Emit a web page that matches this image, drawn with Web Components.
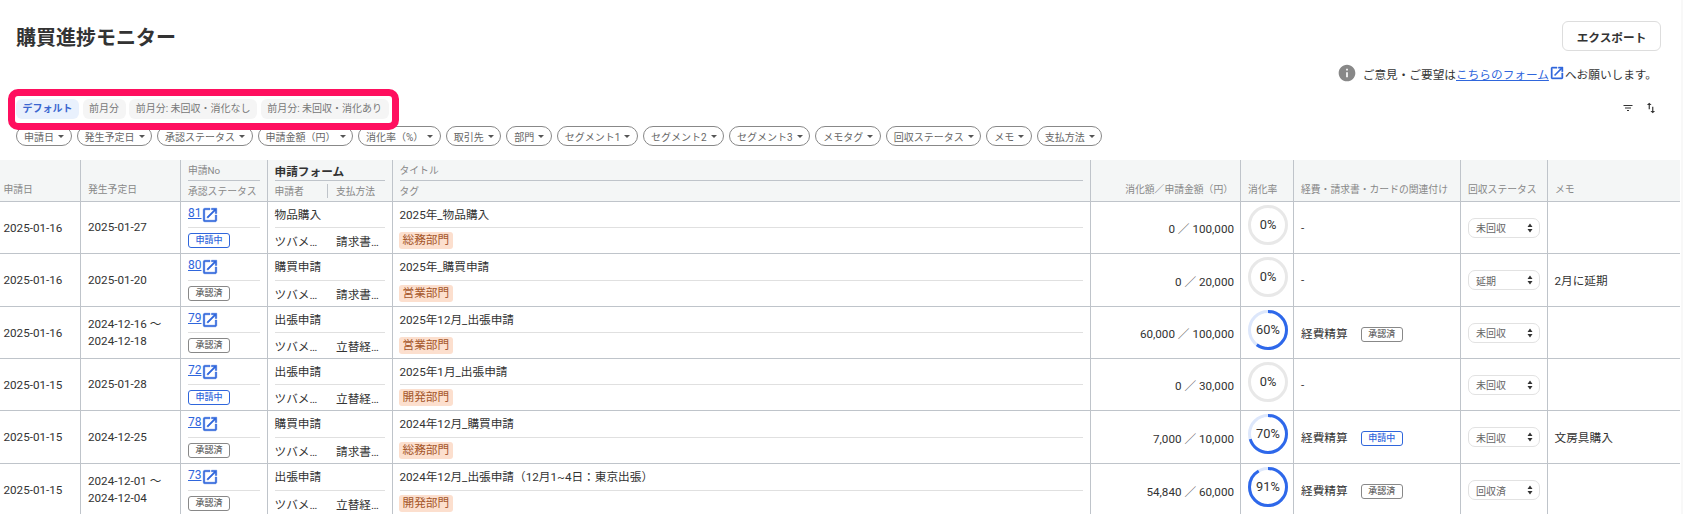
<!DOCTYPE html>
<html lang="ja">
<head>
<meta charset="utf-8">
<title>購買進捗モニター</title>
<style>
html, body { margin: 0; height: 514px; overflow: hidden; }
html { background: #fff; }
body { background: linear-gradient(to right, #fff 1681px, #f8f8f8 1681px); font-family: Roboto, "Noto Sans CJK JP", sans-serif; color: #333; font-size: 11.67px; }
</style>
</head>
<body>
<pm-toolbar heading="購買進捗モニター" action="エクスポート"></pm-toolbar>
<pm-notice></pm-notice>
<pm-tabs highlight>
  <pm-tab active>デフォルト</pm-tab>
  <pm-tab>前月分</pm-tab>
  <pm-tab>前月分: 未回収・消化なし</pm-tab>
  <pm-tab>前月分: 未回収・消化あり</pm-tab>
</pm-tabs>
<pm-filters>
  <pm-chip>申請日</pm-chip>
  <pm-chip>発生予定日</pm-chip>
  <pm-chip>承認ステータス</pm-chip>
  <pm-chip>申請金額（円）</pm-chip>
  <pm-chip>消化率（%）</pm-chip>
  <pm-chip>取引先</pm-chip>
  <pm-chip>部門</pm-chip>
  <pm-chip>セグメント1</pm-chip>
  <pm-chip>セグメント2</pm-chip>
  <pm-chip>セグメント3</pm-chip>
  <pm-chip>メモタグ</pm-chip>
  <pm-chip>回収ステータス</pm-chip>
  <pm-chip>メモ</pm-chip>
  <pm-chip>支払方法</pm-chip>
</pm-filters>
<pm-table-head></pm-table-head>
<pm-row h="52" date="2025-01-16" due="2025-01-27" no="81" status="申請中" form="物品購入" person="ツバメ…" pay="請求書…" name="2025年_物品購入" tag="総務部門" amount="0 ／ 100,000" pct="0" recovery="未回収"></pm-row>
<pm-row h="53" date="2025-01-16" due="2025-01-20" no="80" status="承認済" form="購買申請" person="ツバメ…" pay="請求書…" name="2025年_購買申請" tag="営業部門" amount="0 ／ 20,000" pct="0" recovery="延期" memo="2月に延期"></pm-row>
<pm-row h="52" date="2025-01-16" due="2024-12-16 ～&#10;2024-12-18" no="79" status="承認済" form="出張申請" person="ツバメ…" pay="立替経…" name="2025年12月_出張申請" tag="営業部門" amount="60,000 ／ 100,000" pct="60" rel="経費精算" relstatus="承認済" recovery="未回収"></pm-row>
<pm-row h="52" date="2025-01-15" due="2025-01-28" no="72" status="申請中" form="出張申請" person="ツバメ…" pay="立替経…" name="2025年1月_出張申請" tag="開発部門" amount="0 ／ 30,000" pct="0" recovery="未回収"></pm-row>
<pm-row h="53" date="2025-01-15" due="2024-12-25" no="78" status="承認済" form="購買申請" person="ツバメ…" pay="請求書…" name="2024年12月_購買申請" tag="総務部門" amount="7,000 ／ 10,000" pct="70" rel="経費精算" relstatus="申請中" recovery="未回収" memo="文房具購入"></pm-row>
<pm-row h="53" date="2025-01-15" due="2024-12-01 ～&#10;2024-12-04" no="73" status="承認済" form="出張申請" person="ツバメ…" pay="立替経…" name="2024年12月_出張申請（12月1~4日：東京出張）" tag="開発部門" amount="54,840 ／ 60,000" pct="91" rel="経費精算" relstatus="承認済" recovery="回収済"></pm-row>

<script>
const COLS = '81px 100px 87px 125px 698px 150px 53px 167px 87px 132px';
const LINE = '#bfc4ca';
const EXT_PATH = 'M19 19H5V5h7V3H5a2 2 0 0 0-2 2v14a2 2 0 0 0 2 2h14c1.1 0 2-.9 2-2v-7h-2v7zM14 3v2h3.59l-9.83 9.83 1.41 1.41L19 6.41V10h2V3h-7z';

function extIcon(size) {
    return `<svg class="ext" width="${size}" height="${size}" viewBox="0 0 24 24" fill="#2f66dc" stroke="#2f66dc" stroke-width=".6" style="flex:none"><path d="${EXT_PATH}"/></svg>`;
}

class PmToolbar extends HTMLElement {
    connectedCallback() {
        this.attachShadow({mode: 'open'}).innerHTML = `
        <style>
        :host { display: flex; justify-content: space-between; align-items: center; height: 30px; padding: 21px 22px 0 16px; }
        h1 { margin: 0; font-size: 20px; font-weight: 700; color: #333; }
        button { width: 99px; height: 30px; font: 700 11.67px Roboto, "Noto Sans CJK JP", sans-serif; color: #333;
            background: #fff; border: 1px solid #ddd; border-radius: 6px; padding: 0; }
        </style>
        <h1>${this.getAttribute('heading')}</h1>
        <button>${this.getAttribute('action')}</button>`;
    }
}

class PmNotice extends HTMLElement {
    connectedCallback() {
        this.attachShadow({mode: 'open'}).innerHTML = `
        <style>
        :host { display: flex; justify-content: flex-end; align-items: center; height: 20px; margin-top: 12px; padding-right: 26px; font-size: 11.67px; color: #333; }
        .i { margin-right: 6px; }
        a { color: #2f66dc; text-decoration: underline; }
        svg { display: block; }
        </style>
        <svg class="i" width="20" height="20" viewBox="0 0 24 24" fill="#888"><path d="M12 2C6.48 2 2 6.48 2 12s4.48 10 10 10 10-4.48 10-10S17.52 2 12 2zm1 15h-2v-6h2v6zm0-8h-2V7h2v2z"/></svg>
        <span>ご意見・ご要望は</span><a>こちらのフォーム</a>${extIcon(16)}<span>へお願いします。</span>`;
    }
}

class PmTabs extends HTMLElement {
    connectedCallback() {
        this.attachShadow({mode: 'open'}).innerHTML = `
        <style>
        :host { display: flex; align-items: center; position: relative; z-index: 2; height: 20px; margin-top: 16px; padding: 0 25px 0 16px; }
        .tabs { display: flex; gap: 3.6px; flex: 1; }
        .mark { position: absolute; left: 8px; top: -10px; width: 377px; height: 27px; border: 7px solid #ff0f5f; border-radius: 10px; }
        .sort { display: flex; align-items: center; gap: 10px; margin-top: -2px; }
        svg { display: block; }
        </style>
        <div class="tabs"><slot></slot></div>
        <div class="mark"></div>
        <div class="sort">
            <svg width="12" height="12" viewBox="0 0 24 24" fill="#333"><path d="M10 18h4v-2h-4v2zM3 6v2h18V6H3zm3 7h12v-2H6v2z"/></svg>
            <svg width="14" height="14" viewBox="0 0 24 24" fill="#333"><path d="M16 17.01V10h-2v7.01h-3L15 21l4-3.99h-3zM9 3L5 6.99h3V14h2V6.99h3L9 3z"/></svg>
        </div>`;
    }
}

class PmTab extends HTMLElement {
    connectedCallback() {
        this.attachShadow({mode: 'open'}).innerHTML = `
        <style>
        :host { display: block; height: 20px; line-height: 20px; padding: 0 6.5px; border-radius: 6px; font-size: 10px; background: #f5f5f5; color: #777; white-space: nowrap; }
        :host([active]) { background: #e9f1fd; color: #3a66d0; font-weight: 700; }
        </style>
        <slot></slot>`;
    }
}

class PmFilters extends HTMLElement {
    connectedCallback() {
        this.attachShadow({mode: 'open'}).innerHTML = `
        <style>
        :host { display: flex; gap: 5px; margin-top: 7px; padding-left: 16px; height: 20px; }
        </style>
        <slot></slot>`;
    }
}

class PmChip extends HTMLElement {
    connectedCallback() {
        this.attachShadow({mode: 'open'}).innerHTML = `
        <style>
        :host { display: flex; align-items: center; gap: 4px; box-sizing: border-box; height: 20px; padding: 0 6.5px 0 7px; border: 1px solid #888; border-radius: 10px; font-size: 10px; color: #666; white-space: nowrap; }
        i { width: 0; height: 0; border: 3px solid transparent; border-top: 3.5px solid #555; border-bottom: 0; }
        </style>
        <slot></slot><i></i>`;
    }
}

class PmBadge extends HTMLElement {
    connectedCallback() {
        const blue = this.textContent.trim() === '申請中';
        this.attachShadow({mode: 'open'}).innerHTML = `
        <style>
        :host { display: block; box-sizing: border-box; width: 42px; height: 15px; line-height: 13px; text-align: center; font-size: 9px; font-weight: 500;
            border: 1px solid ${blue ? '#2f66dc' : '#888'}; color: ${blue ? '#2f66dc' : '#666'}; border-radius: 3px; background: #fff; }
        </style>
        <slot></slot>`;
    }
}

class PmDonut extends HTMLElement {
    connectedCallback() {
        const pct = Number(this.getAttribute('pct'));
        const r = 18.5;
        const c = 2 * Math.PI * r;
        const track = pct === 0 ? '#e8e8e8' : '#dde7fb';
        this.attachShadow({mode: 'open'}).innerHTML = `
        <style>
        :host { display: grid; width: 40px; height: 40px; }
        svg, span { grid-area: 1 / 1; }
        span { place-self: center; font-size: 12.8px; color: #333; margin-top: -1px; }
        </style>
        <svg width="40" height="40" viewBox="0 0 40 40" fill="none" stroke-width="3">
            <circle cx="20" cy="20" r="${r}" stroke="${track}"/>
            <circle cx="20" cy="20" r="${r}" stroke="#2e68ea" stroke-dasharray="${c * pct / 100} ${c}" transform="rotate(-90 20 20)"/>
        </svg>
        <span>${pct}%</span>`;
    }
}

class PmSelect extends HTMLElement {
    connectedCallback() {
        this.attachShadow({mode: 'open'}).innerHTML = `
        <style>
        :host { display: flex; align-items: center; justify-content: space-between; box-sizing: border-box; width: 72px; height: 20px; padding: 0 6px 0 7px; border: 1px solid #e2e2e2; border-radius: 7px; font-size: 10px; color: #666; background: #fff; }
        svg { display: block; }
        </style>
        <slot></slot>
        <svg width="6" height="10" viewBox="0 0 6 10" fill="#333"><path d="M3 .5 5.5 4H.5zM3 9.5.5 6h5z"/></svg>`;
    }
}

class PmTableHead extends HTMLElement {
    connectedCallback() {
        this.attachShadow({mode: 'open'}).innerHTML = `
        <style>
        :host { display: grid; grid-template-columns: ${COLS}; width: 1680px; height: 42px; box-sizing: border-box; margin-top: 14px;
            background: #f4f6f6; border-bottom: 1px solid ${LINE}; font-size: 9.8px; color: #888; white-space: nowrap; }
        .c { border-right: 1px solid ${LINE}; display: flex; flex-direction: column; justify-content: flex-end; padding: 0 7px 5px 3.5px; min-width: 0; }
        .c:last-child { border-right: 0; }
        .pad { padding-left: 7px; }
        .r { text-align: right; padding-right: 7px; }
        .s { display: grid; grid-template-rows: 20px 1px 1fr; border-right: 1px solid ${LINE}; padding: 0 7px 0 7px; min-width: 0; }
        .s > div { display: flex; align-items: center; }
        .s > hr { margin: 0; border: 0; background: ${LINE}; }
        .f { padding-left: 6.5px; }
        b { font-size: 11.67px; font-weight: 700; color: #333; }
        .sep { width: 1px; height: 14px; background: ${LINE}; margin: 0 7.5px 0 23.5px; }
        </style>
        <div class="c">申請日</div>
        <div class="c pad">発生予定日</div>
        <div class="s"><div>申請No</div><hr><div>承認ステータス</div></div>
        <div class="s f"><div><b>申請フォーム</b></div><hr><div>申請者<span class="sep"></span>支払方法</div></div>
        <div class="s f"><div>タイトル</div><hr><div>タグ</div></div>
        <div class="c r">消化額／申請金額（円）</div>
        <div class="c pad">消化率</div>
        <div class="c pad">経費・請求書・カードの関連付け</div>
        <div class="c pad">回収ステータス</div>
        <div class="c pad">メモ</div>`;
    }
}

class PmRow extends HTMLElement {
    connectedCallback() {
        const a = n => this.getAttribute(n) || '';
        const rel = a('rel')
            ? `<span class="rt">${a('rel')}</span><pm-badge class="rb">${a('relstatus')}</pm-badge>`
            : '<span>-</span>';
        this.attachShadow({mode: 'open'}).innerHTML = `
        <style>
        :host { display: grid; grid-template-columns: ${COLS}; width: 1680px; height: ${a('h')}px; box-sizing: border-box;
            border-bottom: 1px solid ${LINE}; font-size: 11.67px; color: #333; white-space: nowrap; }
        .c { border-right: 1px solid ${LINE}; display: flex; align-items: center; padding: 0 7px; min-width: 0; }
        .c:last-child { border-right: 0; padding-left: 6.5px; padding-bottom: 2px; }
        .date { padding-left: 3.5px; }
        .due { white-space: pre-line; line-height: 17px; }
        .r { justify-content: flex-end; padding-right: 6px; }
        .d { align-items: flex-start; padding-top: 3px; }
        .s { display: grid; grid-template-rows: 1fr 1px 1fr; border-right: 1px solid ${LINE}; padding: 0 7px; min-width: 0; }
        .s > div { display: flex; align-items: center; min-width: 0; }
        .s > .up { padding-bottom: 3px; box-sizing: border-box; }
        .s > hr { margin: 0; border: 0; background: #e0e0e0; }
        .f { padding-left: 6.5px; }
        a { color: #2f66dc; text-decoration: underline; margin-right: -1px; font-size: 12px; }
        .ext { margin-top: 3px; }
        .person { width: 61.5px; }
        .tag { height: 17px; line-height: 17px; padding: 0 3.5px; margin-left: -0.5px; background: #fcdfce; color: #a5562a; border-radius: 3px; }
        .rt { margin-bottom: 1px; }
        .rb { margin-left: 13px; margin-top: 3px; }
        </style>
        <div class="c date">${a('date')}</div>
        <div class="c due">${a('due')}</div>
        <div class="s"><div class="up"><a>${a('no')}</a>${extIcon(18)}</div><hr><div><pm-badge>${a('status')}</pm-badge></div></div>
        <div class="s f"><div class="up">${a('form')}</div><hr><div><span class="person">${a('person')}</span><span>${a('pay')}</span></div></div>
        <div class="s f"><div class="up">${a('name')}</div><hr><div><span class="tag">${a('tag')}</span></div></div>
        <div class="c r">${a('amount')}</div>
        <div class="c d"><pm-donut pct="${a('pct')}"></pm-donut></div>
        <div class="c">${rel}</div>
        <div class="c"><pm-select>${a('recovery')}</pm-select></div>
        <div class="c">${a('memo')}</div>`;
    }
}

customElements.define('pm-toolbar', PmToolbar);
customElements.define('pm-notice', PmNotice);
customElements.define('pm-tabs', PmTabs);
customElements.define('pm-tab', PmTab);
customElements.define('pm-filters', PmFilters);
customElements.define('pm-chip', PmChip);
customElements.define('pm-badge', PmBadge);
customElements.define('pm-donut', PmDonut);
customElements.define('pm-select', PmSelect);
customElements.define('pm-table-head', PmTableHead);
customElements.define('pm-row', PmRow);
</script>
</body>
</html>
